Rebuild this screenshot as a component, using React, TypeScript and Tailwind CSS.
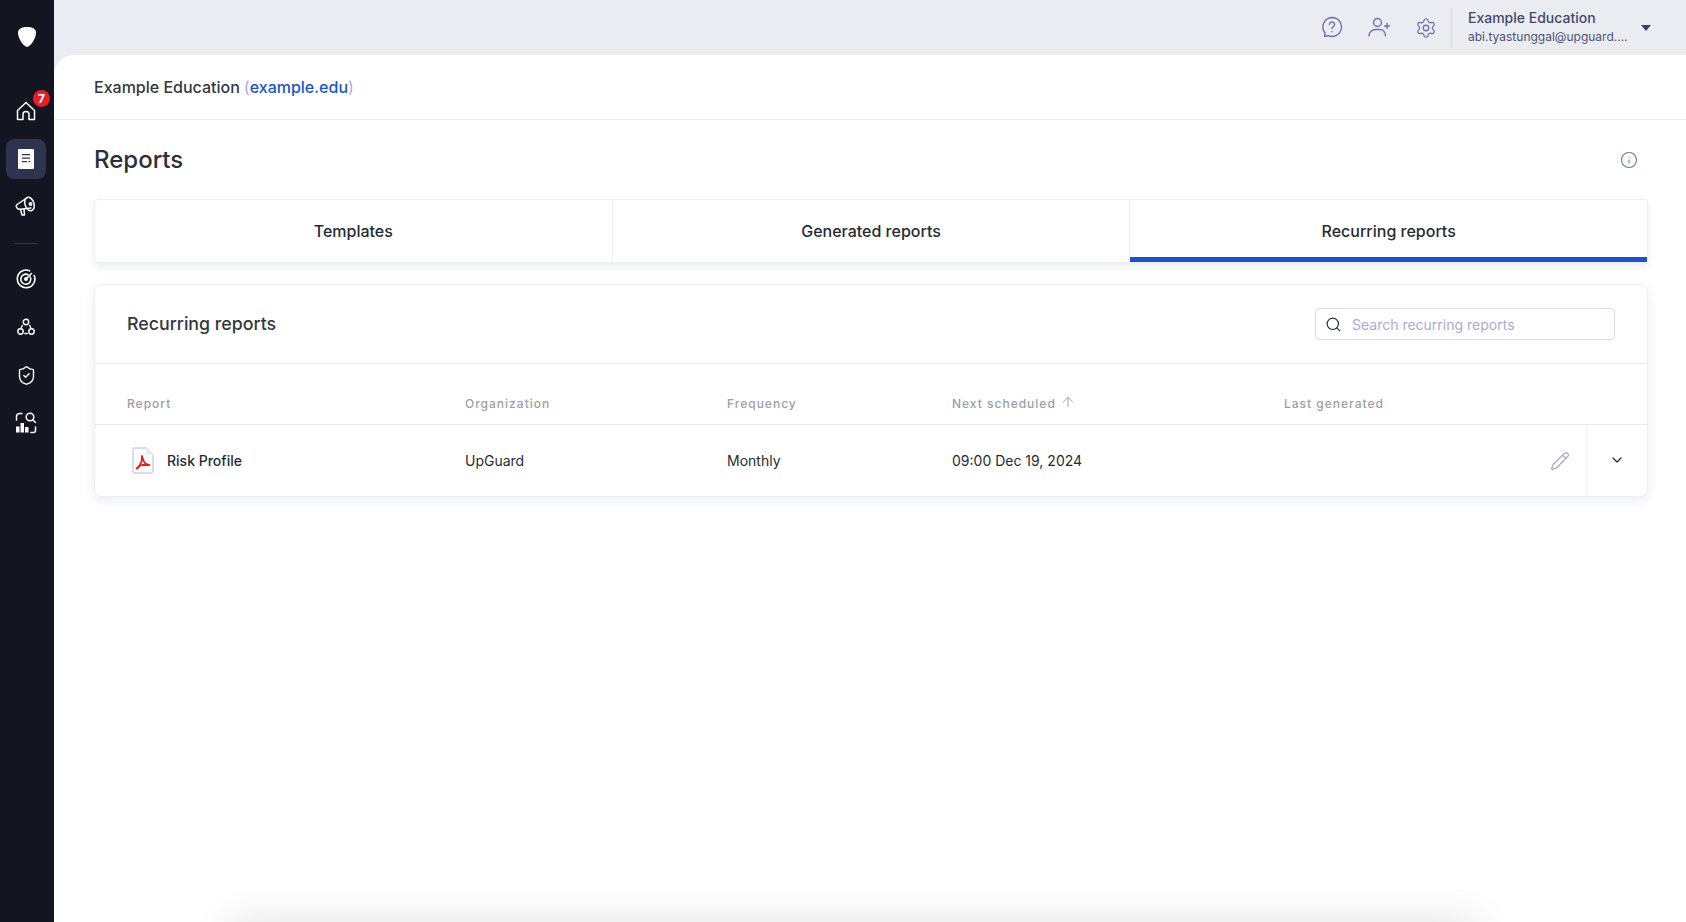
import { ArrowUp, ChevronDown, Info, Pencil, Search, Settings, ShieldCheck } from "lucide-react";

const columns = "grid grid-cols-[338px_262px_225px_332px_1fr]";

function SideIcon({ children, active, className }: { children: React.ReactNode; active?: boolean; className?: string }) {
  return (
    <div className={`flex h-10 w-10 items-center justify-center rounded-lg text-white ${active ? "bg-[#2e3350]" : ""} ${className ?? ""}`}>
      {children}
    </div>
  );
}

function Sidebar() {
  return (
    <aside className="flex h-full w-[54px] shrink-0 flex-col items-center bg-[#131620]">
      <svg className="mt-[27px] mr-[1px] h-[20px] w-[18px]" viewBox="0 0 18 20" fill="#fff">
        <path d="M9 0C14 0 18 1.800 18 5.500 18 11 13.500 18.500 9 20 4.500 18.500 0 11 0 5.500 0 1.800 4 0 9 0z" />
      </svg>
      <div className="relative mt-[44px] mr-[2px]">
        <SideIcon>
          <svg width="20" height="20" viewBox="0 0 20 20" fill="none" stroke="currentColor" strokeWidth="1.500" strokeLinejoin="round">
            <path d="M1.500 9.500 10 1.500l8.500 8v9h-5.500v-5a3 3 0 0 0-6 0v5H1.500z" />
          </svg>
        </SideIcon>
        <span className="absolute -top-[1px] left-[27px] flex h-[17px] w-[17px] items-center justify-center rounded-full bg-[#e3202a] text-[12px] font-bold text-white">7</span>
      </div>
      <SideIcon active className="mt-[8px] mr-[2px]">
        <svg width="16" height="20" viewBox="0 0 16 20">
          <path fill="#fff" fillRule="evenodd" d="M1 0h14a1 1 0 0 1 1 1v18a1 1 0 0 1-1 1H1a1 1 0 0 1-1-1V1a1 1 0 0 1 1-1zM4 5v1.200h8V5zm0 3.500v1.200h8V8.500zm0 3.500v1.200h5V12zm6.500 0v1.200H12V12z" />
        </svg>
      </SideIcon>
      <SideIcon className="mt-[7px] mr-[2px]">
        <svg width="22" height="22" viewBox="0 0 22 22" fill="none" stroke="currentColor" strokeWidth="1.500" strokeLinejoin="round" strokeLinecap="round">
          <ellipse cx="14.500" cy="9" rx="4.500" ry="7" transform="rotate(-18 14.500 9)" />
          <path d="M12.500 2.500 2 9.500c-1 .8-1 2.300 0 3.500.8 1 2 1.500 3 1.200l11-1.300" />
          <path d="M5.500 14.500 7 20h2.500L9 14" />
          <circle cx="15.500" cy="9" r="1.200" />
        </svg>
      </SideIcon>
      <div className="mt-[17px] mb-[15px] mr-[2px] h-px w-6 bg-[#343848]" />
      <SideIcon className="mr-[2px]">
        <svg width="20" height="20" viewBox="0 0 20 20" fill="none" stroke="currentColor" strokeWidth="1.600" strokeLinecap="round">
          <path d="M13.500 1.800a8.800 8.800 0 1 0 4.700 4.700" />
          <path d="M12 5.700A5 5 0 1 0 14.300 8" />
          <path d="M9.500 10.500l6-6" />
          <circle cx="10" cy="10" r="1.200" />
        </svg>
      </SideIcon>
      <SideIcon className="mt-[8px] mr-[2px]">
        <svg width="20" height="20" viewBox="0 0 20 20" fill="none" stroke="currentColor" strokeWidth="1.400" strokeLinecap="round">
          <circle cx="10" cy="5" r="2.700" />
          <circle cx="4.500" cy="14.500" r="2.700" />
          <circle cx="15.500" cy="14.500" r="2.700" />
          <path d="M8.800 16.500h2.400M6.300 8.500l-1 2M13.700 8.500l1 2" />
        </svg>
      </SideIcon>
      <SideIcon className="mt-[8px] mr-[2px]">
        <ShieldCheck size={21} strokeWidth={1.600} />
      </SideIcon>
      <SideIcon className="mt-[8px] mr-[2px]">
        <svg width="22" height="22" viewBox="0 0 22 22" fill="none" stroke="currentColor" strokeWidth="1.500" strokeLinecap="round">
          <path d="M1.500 8V4.500a3 3 0 0 1 3-3H7" />
          <circle cx="15" cy="5" r="3.800" />
          <path d="M18 8l2.500 2.500" />
          <path d="M20.500 15v3.500a2 2 0 0 1-2 2H16" />
          <path fill="currentColor" stroke="none" d="M1 14.500h3.500V20.500H1zM5.500 11h3.500v9.500H5.500zM10 15h3.500v5.500H10z" />
        </svg>
      </SideIcon>
    </aside>
  );
}

function TopBar() {
  return (
    <header className="flex h-[55px] shrink-0 items-center justify-end text-[#6e72ab]">
      <svg width="22" height="22" viewBox="0 0 22 22" fill="none" stroke="currentColor" strokeWidth="1.400" strokeLinecap="round" strokeLinejoin="round" className="mr-[25px] mb-[1px]">
        <path d="M11 1.500a9.500 9.500 0 1 1-3.800 18.200l-3.700.8.700-3.300A9.500 9.500 0 0 1 11 1.500z" />
        <path d="M8.500 8.500a2.500 2.500 0 1 1 3.600 2.300c-.8.400-1.100.9-1.100 1.700" />
        <path d="M11 15.500v.2" />
      </svg>
      <svg width="23" height="20" viewBox="0 0 23 20" fill="none" stroke="currentColor" strokeWidth="1.400" strokeLinecap="round" className="mr-[24px] mb-[1px]">
        <circle cx="9.500" cy="5.500" r="4" />
        <path d="M1 19c0-4 3-6.500 6.500-6.500h4c3.500 0 6 2.500 6 6.500" />
        <path d="M19 6.500v5M16.500 9h5" />
      </svg>
      <Settings size={22} strokeWidth={1.400} className="mr-[14px]" />
      <div className="h-10 w-px bg-[#d3d4dc]" />
      <div className="ml-[16px] w-[166px]">
        <p className="text-[14px] leading-[19px] font-medium text-[#43476a]">Example Education</p>
        <p className="text-[12px] leading-[20px] text-[#4f5372]">abi.tyastunggal@upguard....</p>
      </div>
      <svg width="10" height="6" viewBox="0 0 10 6" className="mr-[35px] ml-[7px]" fill="#3b3f62">
        <path d="M0 0h10L5 6z" />
      </svg>
    </header>
  );
}

function Tabs() {
  const tabs = ["Templates", "Generated reports", "Recurring reports"];
  return (
    <div className="mt-[19px] flex h-[64px] rounded-[4px] border border-[#eceef2] bg-white shadow-[0_4px_8px_rgba(30,35,60,0.08)]">
      {tabs.map((tab, index) => (
        <div
          key={tab}
          className={`relative flex flex-1 items-center justify-center text-[16px] font-medium text-[#262b33] ${index < 2 ? "border-r border-[#eceef2]" : ""}`}
        >
          {tab}
          {index === 2 ? <span className="absolute right-0 bottom-0 left-0 h-[5px] bg-[#1b54c9]" /> : null}
        </div>
      ))}
    </div>
  );
}

function ReportsTable() {
  return (
    <section className="mt-[21px] rounded-[8px] border border-[#eceef2] bg-white shadow-[0_4px_12px_rgba(30,35,60,0.08)]">
      <div className="flex h-[79px] items-center justify-between border-b border-[#e8e9f0] px-[32px]">
        <h2 className="text-[17.800px] font-medium text-[#33373f]">Recurring reports</h2>
        <div className="flex h-[32px] w-[300px] items-center rounded-[4px] border border-[#d9dbec] px-[9px]">
          <Search size={17} strokeWidth={1.600} className="text-[#262b33]" />
          <span className="ml-[10px] text-[14px] text-[#a9acd3]">Search recurring reports</span>
        </div>
      </div>
      <div className={`${columns} h-[61px] items-end border-b border-[#e8e9f0] pb-[11px] pl-[32px] text-[12px] font-medium tracking-[1px] text-[#9d9ea4]`}>
        <span>Report</span>
        <span>Organization</span>
        <span>Frequency</span>
        <span className="flex items-center">
          Next scheduled
          <ArrowUp size={16} strokeWidth={1.400} className="mb-[3px] ml-[4px]" />
        </span>
        <span>Last generated</span>
      </div>
      <div className="flex h-[71px] items-center text-[14px] text-[#262b33]">
        <div className={`${columns} flex-1 items-center pl-[32px]`}>
          <span className="flex items-center font-medium">
            <svg width="22" height="27" viewBox="0 0 22 27" className="mr-[13px] ml-[5px]" fill="none">
              <path d="M3 1h11l7 7v15.500a2.500 2.500 0 0 1-2.500 2.500h-15.500A2.500 2.500 0 0 1 1 23.500v-20.500A2 2 0 0 1 3 1z" stroke="#cfd1e4" strokeWidth="1.500" />
              <path d="M14 1v7h7" fill="#eceef6" />
              <path d="M4.500 21.500c2.500-1.500 4-4 5-7 .4-1.500.4-4 .4-5.500 1 3.500 2.300 6.500 3.500 7.500l4 1.500h-7.500c-2 .5-3.500 2-4.400 3.500z" stroke="#e2202a" strokeWidth="1.800" strokeLinejoin="round" />
            </svg>
            Risk Profile
          </span>
          <span>UpGuard</span>
          <span>Monthly</span>
          <span>09:00 Dec 19, 2024</span>
          <span />
        </div>
        <div className="flex w-[60px] items-center justify-end pr-[16px]">
          <Pencil size={20} strokeWidth={1.500} className="text-[#a3a6d0]" />
        </div>
        <div className="flex h-full w-[61px] items-center justify-center border-l border-[#f3f3f6]">
          <ChevronDown size={16} strokeWidth={1.800} className="mb-[2px]" />
        </div>
      </div>
    </section>
  );
}

export default function App() {
  return (
    <div className="flex h-screen w-full overflow-hidden bg-[#ebecf2] font-['Inter',sans-serif]">
      <Sidebar />
      <div className="flex min-w-0 flex-1 flex-col">
        <TopBar />
        <main className="relative flex-1 overflow-hidden rounded-tl-[20px] bg-white">
          <div className="flex h-[65px] items-center border-b border-[#ececf0] pl-[40px] text-[16px] text-[#33373f]">
            <span className="font-medium">Example Education</span>
            <span className="ml-[4px] text-[#a9acd3]">(</span>
            <span className="font-medium text-[#1b54c9]">example.edu</span>
            <span className="text-[#a9acd3]">)</span>
          </div>
          <div className="pr-[38px] pl-[40px]">
            <div className="mt-[20px] flex items-center justify-between">
              <h1 className="text-[24px] leading-[40px] font-medium text-[#2b3038]">Reports</h1>
              <Info size={18} strokeWidth={1.500} className="mr-[10px] text-[#6e72ab]" />
            </div>
            <Tabs />
            <ReportsTable />
          </div>
          <div className="absolute -bottom-[25px] left-[175px] h-[20px] w-[1250px] rounded-[10px] shadow-[0_0_40px_rgba(0,0,0,0.2)]" />
        </main>
      </div>
    </div>
  );
}
